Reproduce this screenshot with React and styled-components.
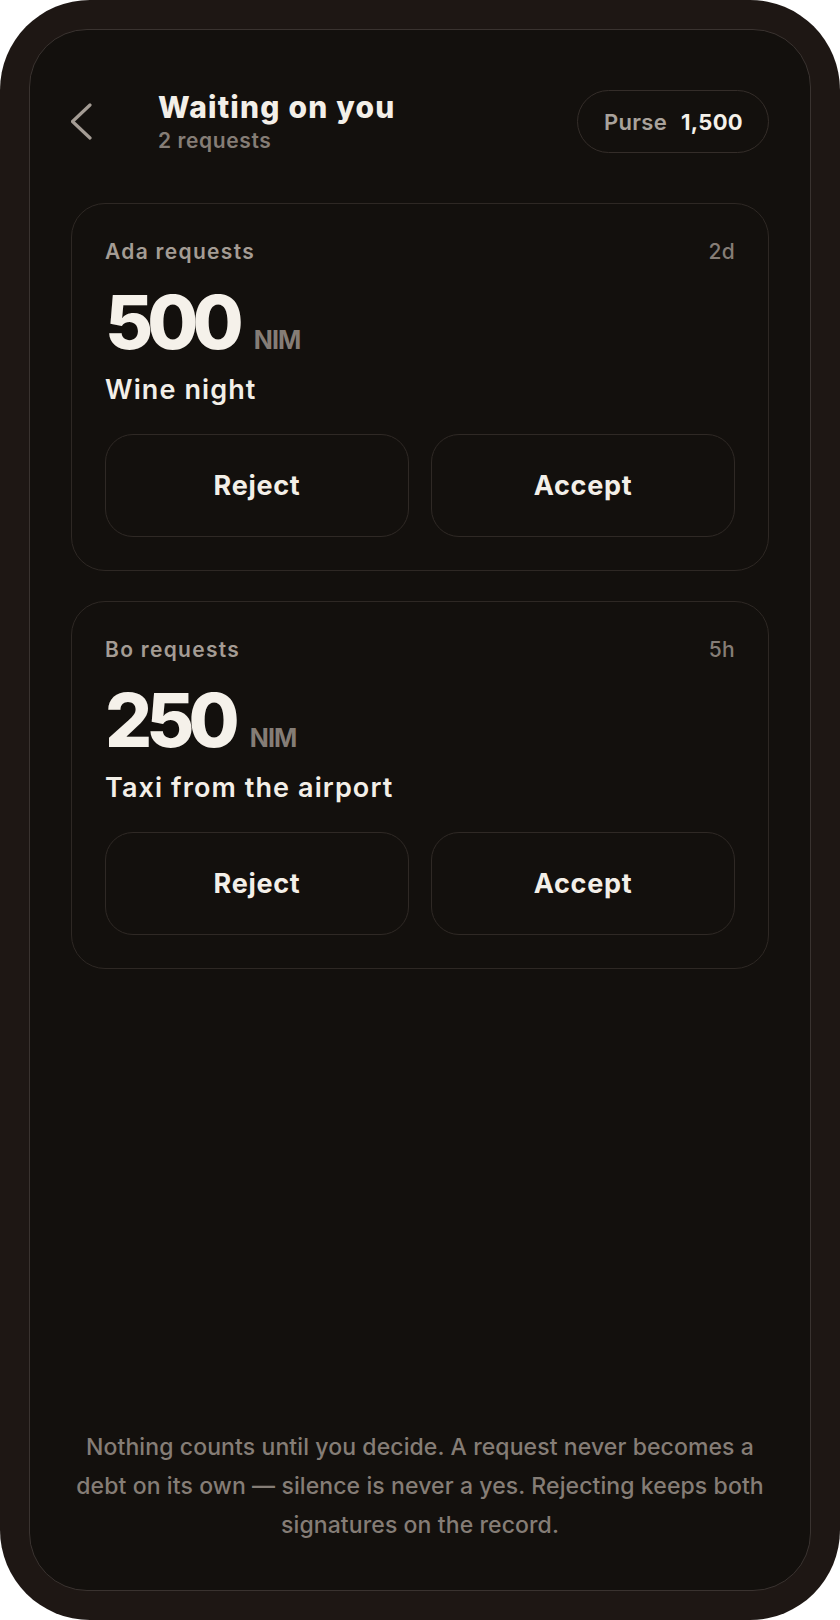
import React from 'react'
import styled, { createGlobalStyle } from 'styled-components'

const Global = createGlobalStyle`
    html, body {
        margin: 0;
        padding: 0;
        background: #fff;
    }
    * {
        box-sizing: border-box;
    }
    body {
        font-family: Inter, "Noto Sans", sans-serif;
    }
`

const Frame = styled.div`
    width: 840px;
    height: 1620px;
    padding: 29px;
    border-radius: 90px;
    background: #1e1714;
`

const Screen = styled.div`
    height: 100%;
    display: flex;
    flex-direction: column;
    padding: 60px 41px 45px;
    border: 1px solid #3a3330;
    border-radius: 58px;
    background: #13100d;
    color: #f3efe8;
`

const Header = styled.header`
    display: flex;
    align-items: center;
    gap: 43px;
    height: 63px;
    margin-bottom: 50px;
`

const BackBtn = styled.button`
    width: 44px;
    height: 48px;
    padding: 0;
    border: 0;
    background: none;
    display: flex;
    align-items: center;
    cursor: pointer;
`

const TitleBlock = styled.div`
    display: flex;
    flex-direction: column;

    & h1 {
        margin: 0;
        font-size: 30px;
        line-height: 34px;
        font-weight: 800;
        letter-spacing: 1.2px;
        color: #f3efe8;
    }

    & span {
        margin-top: 4px;
        font-size: 21px;
        line-height: 25px;
        font-weight: 600;
        letter-spacing: 0.6px;
        color: #857d76;
    }
`

const Purse = styled.div`
    margin-left: auto;
    height: 63px;
    padding: 0 25px 0 26px;
    display: flex;
    align-items: center;
    gap: 14px;
    border: 1.5px solid #342d29;
    border-radius: 999px;
    font-size: 22px;
    font-weight: 600;
    letter-spacing: 0.3px;
    color: #a9a29b;

    & b {
        color: #f5f1ea;
        font-weight: 700;
    }
`

const List = styled.div`
    display: flex;
    flex-direction: column;
    gap: 30px;
`

const Card = styled.section`
    height: 368px;
    padding: 34px 33px 33px;
    border: 1px solid #2e2824;
    border-radius: 34px;
    display: flex;
    flex-direction: column;
`

const CardTop = styled.div`
    display: flex;
    justify-content: space-between;
    font-size: 21px;
    line-height: 28px;
    font-weight: 600;
    letter-spacing: 1.3px;
    color: #a49c94;

    & time {
        font-weight: 500;
        letter-spacing: 0.3px;
        color: #857d76;
    }
`

const Amount = styled.div`
    margin-top: 18px;
    display: flex;
    align-items: baseline;
    gap: 16px;
    line-height: 76px;
    height: 76px;

    & strong {
        font-size: 74px;
        font-weight: 800;
        letter-spacing: -6px;
        color: #f5f1ea;
    }

    & span {
        font-size: 25px;
        font-weight: 700;
        letter-spacing: -0.8px;
        color: #857d76;
    }
`

const Note = styled.div`
    margin-top: 12px;
    font-size: 27px;
    line-height: 36px;
    font-weight: 600;
    letter-spacing: 1.1px;
    color: #f3efe8;
`

const Actions = styled.div`
    margin-top: 26px;
    display: grid;
    grid-template-columns: 1fr 1fr;
    gap: 22px;
`

const ActionBtn = styled.button`
    height: 103px;
    border: 1.5px solid #2f2925;
    border-radius: 28px;
    background: transparent;
    font-family: inherit;
    font-size: 27px;
    font-weight: 700;
    letter-spacing: 0.7px;
    color: #f3efe8;
    cursor: pointer;
`

const Footer = styled.p`
    margin: auto 0 0;
    text-align: center;
    font-size: 23px;
    line-height: 39px;
    font-weight: 500;
    letter-spacing: 0.1px;
    color: #857d76;
`

const requests = [
    { from: 'Ada', ago: '2d', amount: 500, note: 'Wine night' },
    { from: 'Bo', ago: '5h', amount: 250, note: 'Taxi from the airport' },
]

const Chevron = () => (
    <svg width="24" height="40" viewBox="0 0 24 40" fill="none">
        <path d="M19 3 L1.5 19.5 L19 36" stroke="#a49c94" strokeWidth="3.2" strokeLinecap="round" strokeLinejoin="round" />
    </svg>
)

const App = () => {
    return (
        <Frame>
            <Global />
            <Screen>
                <Header>
                    <BackBtn aria-label="Back">
                        <Chevron />
                    </BackBtn>
                    <TitleBlock>
                        <h1>Waiting on you</h1>
                        <span>{requests.length} requests</span>
                    </TitleBlock>
                    <Purse>
                        Purse <b>1,500</b>
                    </Purse>
                </Header>
                <List>
                    {requests.map((r) => (
                        <Card key={r.from}>
                            <CardTop>
                                <span>{r.from} requests</span>
                                <time>{r.ago}</time>
                            </CardTop>
                            <Amount>
                                <strong>{r.amount}</strong>
                                <span>NIM</span>
                            </Amount>
                            <Note>{r.note}</Note>
                            <Actions>
                                <ActionBtn>Reject</ActionBtn>
                                <ActionBtn>Accept</ActionBtn>
                            </Actions>
                        </Card>
                    ))}
                </List>
                <Footer>
                    Nothing counts until you decide. A request never becomes a debt on its own — silence is never a yes. Rejecting keeps both signatures on the record.
                </Footer>
            </Screen>
        </Frame>
    )
}

export default App
